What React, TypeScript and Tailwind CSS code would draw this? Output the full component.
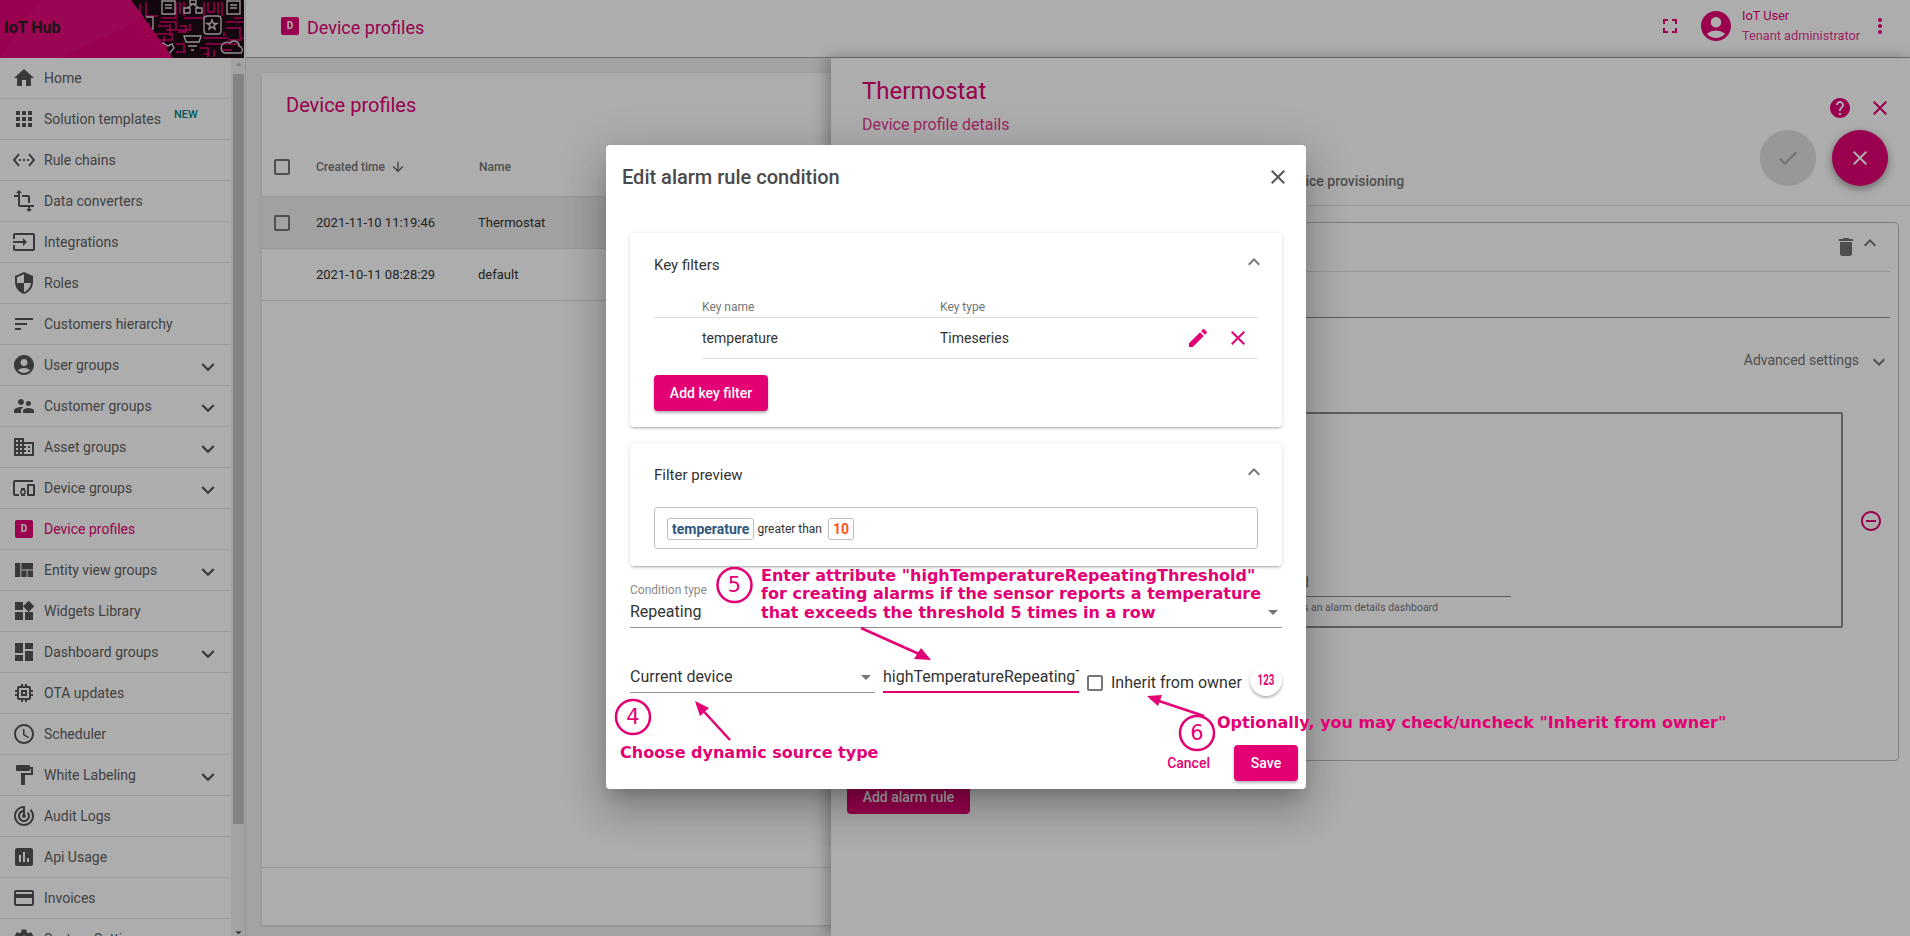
import {
  MdHome, MdApps, MdSettingsEthernet, MdTransform, MdInput, MdSecurity, MdSort, MdAccountCircle,
  MdSupervisorAccount, MdDomain, MdDevicesOther, MdViewQuilt, MdWidgets, MdDashboard, MdMemory,
  MdSchedule, MdFormatPaint, MdTrackChanges, MdAssessment, MdCreditCard, MdSettings, MdExpandMore,
  MdExpandLess, MdClose, MdEdit, MdArrowDownward, MdFullscreen, MdMoreVert, MdHelp, MdCheck, MdDelete,
  MdRemoveCircleOutline, MdArrowDropDown, MdArrowDropUp,
} from 'react-icons/md';
import type { IconType } from 'react-icons';

type NavItem = { label: string; icon?: IconType; more?: boolean; active?: boolean; badge?: boolean };

const nav: NavItem[] = [
  { label: 'Home', icon: MdHome },
  { label: 'Solution templates', icon: MdApps, badge: true },
  { label: 'Rule chains', icon: MdSettingsEthernet },
  { label: 'Data converters', icon: MdTransform },
  { label: 'Integrations', icon: MdInput },
  { label: 'Roles', icon: MdSecurity },
  { label: 'Customers hierarchy', icon: MdSort },
  { label: 'User groups', icon: MdAccountCircle, more: true },
  { label: 'Customer groups', icon: MdSupervisorAccount, more: true },
  { label: 'Asset groups', icon: MdDomain, more: true },
  { label: 'Device groups', icon: MdDevicesOther, more: true },
  { label: 'Device profiles', active: true },
  { label: 'Entity view groups', icon: MdViewQuilt, more: true },
  { label: 'Widgets Library', icon: MdWidgets },
  { label: 'Dashboard groups', icon: MdDashboard, more: true },
  { label: 'OTA updates', icon: MdMemory },
  { label: 'Scheduler', icon: MdSchedule },
  { label: 'White Labeling', icon: MdFormatPaint, more: true },
  { label: 'Audit Logs', icon: MdTrackChanges },
  { label: 'Api Usage', icon: MdAssessment },
  { label: 'Invoices', icon: MdCreditCard },
  { label: 'System Settings', icon: MdSettings },
];

const DBadge = ({ size }: { size: string }) => (
  <span className={`${size} flex items-center justify-center rounded-[2px] bg-[#e20074] text-[10px] font-bold leading-none text-white`}>
    D
  </span>
);

// circuit-board picture behind the logo
const Logo = () => (
  <svg width="244" height="58" viewBox="0 0 244 58" className="absolute inset-0">
    <rect width="244" height="58" fill="#1c0a14" />
    <g stroke="#e20074" strokeWidth="1.5" fill="none">
      <path d="M140 4v20h10M146 2v14h12M176 2v18M184 2v14M204 2v16h-20M222 2v14M214 2v10h-6M160 22h16v8h-10M150 34h22v6h-12M178 30h12v-6M226 22h18M226 28h14v10h4M206 44h34M200 48h8v9M214 50v7M222 50h10M170 24v12M186 52h-10M160 46h6v8M150 40h8v14" />
      <path d="M180 2v12M208 2v10M218 2v12M162 18h14M158 26h12M164 36v8M176 44h8v8M204 38h24M228 40h14M204 54h6M234 18h8M224 36v-4M180 26h6v6h-8" />
    </g>
    <g stroke="#d8d8d8" strokeWidth="1.4" fill="none">
      <path d="M162 1h13v13h-13zM165 5h7M165 8h7M227 1h13v13h-13zM230 5h7M230 8h7" />
      <path d="M184 8h6v5h-6zM196 8h6v5h-6zM190 0h6v4h-6zM193 4l-6 4M193 4l6 4" />
      <rect x="204" y="16" width="17" height="18" rx="3" />
      <path d="M212 20l1.5 3.5h3.5l-3 2 1 3.500-3-2-3 2 1-3.500-3-2h3.500z" />
      <path d="M184 36h17l-2 6h-13zM188 46h9M191 50h3" />
      <path d="M224 53h17a4 4 0 0 0-2-7 5 5 0 0 0-9-3 5 5 0 0 0-6 10zM163 43l5 3 4-2 2 4-6 7-6-6z" />
      <path d="M146 17h7v12h-7" />
    </g>
    <polygon points="0,0 131,0 173,58 0,58" fill="#e20074" />
    <polygon points="40,0 131,0 145,18 60,58 0,58" fill="#ea1a84" opacity="0.35" />
  </svg>
);

const Sidebar = () => (
  <aside className="flex h-full w-[246px] shrink-0 flex-col border-r border-[#dddddd] bg-white">
    <div className="relative h-[58px] w-[244px] shrink-0 overflow-hidden">
      <Logo />
      <span className="absolute left-[4px] top-[17px] text-[16px] font-bold leading-[22px] text-[#222222]">IoT Hub</span>
    </div>
    <div className="flex min-h-0 flex-1">
      <nav className="w-[231px] shrink-0 overflow-hidden">
        {nav.map((item) => {
          const Icon = item.icon;
          return (
            <div key={item.label} className="relative flex h-[41px] shrink-0 items-center border-b border-[#e3e3e3] pl-[12px]">
              <span className="flex w-[32px] shrink-0 items-center">
                {Icon ? <Icon className="size-[24px] text-[#555555]" /> : <span className="pl-[3px]"><DBadge size="size-[18px]" /></span>}
              </span>
              <span className={`text-[14px] leading-[20px] ${item.active ? 'text-[#e20074]' : 'text-[#616161]'}`}>{item.label}</span>
              {item.badge && <span className="ml-[13px] -mt-[9px] text-[11px] font-medium leading-[14px] text-[#00868b]">NEW</span>}
              {item.more && <MdExpandMore className="absolute left-[195px] top-[9px] size-[26px] text-[#555555]" />}
            </div>
          );
        })}
      </nav>
      <div className="relative flex w-[15px] flex-col items-center bg-[#f1f1f1] pt-[16px]">
        <MdArrowDropUp className="absolute -top-[1px] left-0 size-[15px] text-[#bbbbbb]" />
        <div className="ml-[1px] h-[750px] w-[11px] bg-[#c1c1c1]" />
        <MdArrowDropDown className="absolute bottom-[-4px] left-0 size-[15px] text-[#555555]" />
      </div>
    </div>
  </aside>
);

const Header = () => (
  <header className="flex h-[58px] items-center border-b border-[#a8a8a8] bg-white pb-[6px] pl-[35px] pr-[18px]">
    <DBadge size="size-[18px]" />
    <span className="ml-[8px] mt-[4px] text-[18px] text-[#e20074]">Device profiles</span>
    <MdFullscreen className="ml-auto size-[24px] text-[#e20074]" />
    <MdAccountCircle className="ml-[16px] size-[36px] text-[#e20074]" />
    <div className="ml-[8px] flex w-[121px] flex-col gap-[3px] text-[12.75px] leading-[17px] text-[#e20074]">
      <span>IoT User</span>
      <span className="opacity-80">Tenant administrator</span>
    </div>
    <MdMoreVert className="ml-[5px] size-[24px] text-[#e20074]" />
  </header>
);

const Check = () => <span className="size-[16px] rounded-[2px] border-2 border-[#757575]" />;

const ProfilesCard = () => (
  <section className="ml-[16px] mt-[15px] flex h-[852px] w-[570px] flex-col bg-white shadow-sm">
    <h2 className="flex h-[64px] items-center pl-[24px] text-[20px] text-[#e20074]">Device profiles</h2>
    <div className="flex h-[60px] items-center border-b border-[#e0e0e0] pl-[12px] text-[12px] font-medium text-[#757575]">
      <Check />
      <span className="ml-[26px]">Created time</span>
      <MdArrowDownward className="ml-[5px] size-[16px] text-[#616161]" />
      <span className="ml-[73px]">Name</span>
    </div>
    <div className="flex h-[52px] items-center border-b border-[#e0e0e0] bg-[#eeeeee] pl-[12px] text-[13px] text-[#333333]">
      <Check />
      <span className="ml-[26px] w-[162px]">2021-11-10 11:19:46</span>
      <span>Thermostat</span>
    </div>
    <div className="flex h-[52px] items-center border-b border-[#e0e0e0] pl-[54px] text-[13px] text-[#333333]">
      <span className="w-[162px]">2021-10-11 08:28:29</span>
      <span>default</span>
    </div>
    <div className="mt-auto h-[58px] border-t border-[#e0e0e0]" />
  </section>
);

const Drawer = () => (
  <section className="absolute bottom-0 left-[831px] right-0 top-[58px] bg-white shadow-[-4px_0_14px_rgba(0,0,0,0.3)]">
    <div className="relative h-[148px] border-b border-[#e0e0e0] pl-[31px]">
      <h2 className="pt-[16px] text-[24px] leading-[34px] text-[#e20074]">Thermostat</h2>
      <p className="pt-[6px] text-[16px] leading-[22px] text-[#e20074] opacity-80">Device profile details</p>
      <p className="absolute bottom-[14px] left-[451px] text-[14px] font-medium leading-[20px] text-[#757575]">Device provisioning</p>
      <MdHelp className="absolute left-[997px] top-[38px] size-[24px] text-[#e20074]" />
      <MdClose className="absolute left-[1037px] top-[38px] size-[24px] text-[#e20074]" />
      <span className="absolute left-[929px] top-[72px] flex size-[56px] items-center justify-center rounded-full bg-[#e0e0e0]">
        <MdCheck className="size-[24px] text-[#a6a6a6]" />
      </span>
      <span className="absolute left-[1001px] top-[72px] flex size-[56px] items-center justify-center rounded-full bg-[#e20074] shadow-[0_3px_8px_rgba(0,0,0,0.4)]">
        <MdClose className="size-[24px] text-white" />
      </span>
    </div>
    <div className="ml-[16px] mr-[11px] mt-[16px] h-[539px] rounded-[4px] border border-[#bdbdbd] pl-[8px] pr-[8px]">
      <div className="flex h-[49px] items-center justify-end border-b border-[#e0e0e0] pr-[8px]">
        <MdDelete className="size-[24px] text-[#757575]" />
        <MdExpandLess className="-mt-[8px] size-[24px] text-[#757575]" />
      </div>
      <div className="h-[46px] border-b border-[#8c8c8c]" />
      <div className="flex h-[94px] items-start justify-end pt-[30px] text-[14px] leading-[24px] text-[#757575]">
        Advanced settings
        <MdExpandMore className="-mr-[1px] ml-[8px] mt-[2px] size-[24px]" />
      </div>
      <div className="flex items-center">
        <div className="flex h-[216px] w-[987px] flex-col items-end justify-end rounded-[2px] border-2 border-[#8c8c8c] pb-[11px] pr-[330px]">
          <div className="w-[400px] border-b border-[#8c8c8c] pb-[3px] text-[14px] leading-[22px] text-[#757575]">
            <span className="block w-[198px] text-right">Mobile dashboard field</span>
          </div>
          <div className="mt-[4px] w-[400px] text-[10.5px] leading-[14px] text-[#757575]">
            <span className="block w-[327px] whitespace-nowrap text-right">Used by mobile app as an alarm details dashboard</span>
          </div>
        </div>
        <MdRemoveCircleOutline className="ml-[16px] mt-[1px] size-[24px] text-[#e20074]" />
      </div>
    </div>
    <button className="ml-[16px] mt-[17px] h-[36px] w-[123px] rounded-[4px] bg-[#e20074] pt-[2px] text-[14px] font-medium text-white">Add alarm rule</button>
  </section>
);

const ModalCard = ({ title, children }: { title: string; children: React.ReactNode }) => (
  <div className="rounded-[4px] bg-white px-[24px] shadow-[0_2px_2px_-1px_rgba(0,0,0,0.25),0_1px_4px_rgba(0,0,0,0.14)]">
    <div className="flex h-[64px] items-center justify-between">
      <span className="pt-[1px] text-[15px] text-[#333333]">{title}</span>
      <MdExpandLess className="-mr-[8px] -mt-[6px] size-[24px] text-[#757575]" />
    </div>
    {children}
  </div>
);

const Modal = () => (
  <div className="absolute left-[606px] top-[145px] flex h-[644px] w-[700px] flex-col rounded-[4px] bg-white px-[24px] shadow-[0_11px_15px_-7px_rgba(0,0,0,0.2),0_24px_38px_3px_rgba(0,0,0,0.14),0_9px_46px_8px_rgba(0,0,0,0.12)]">
    <div className="flex h-[64px] shrink-0 items-center justify-between -ml-[8px] -mr-[8px]">
      <h2 className="text-[20px] font-medium text-[#4a4a4a]">Edit alarm rule condition</h2>
      <MdClose className="size-[24px] text-[#555555]" />
    </div>
    <div className="mt-[24px] flex flex-col gap-[16px]">
      <ModalCard title="Key filters">
        <div className="flex h-[21px] items-center border-b border-[#dddddd] pl-[48px] text-[12px] text-[#757575]">
          <span className="w-[238px]">Key name</span>
          <span>Key type</span>
        </div>
        <div className="ml-[48px] flex h-[41px] items-center border-b border-[#e0e0e0] text-[14px] text-[#333333]">
          <span className="w-[238px]">temperature</span>
          <span>Timeseries</span>
          <MdEdit className="ml-auto size-[24px] text-[#e20074]" />
          <MdClose className="ml-[16px] mr-[8px] size-[24px] text-[#e20074]" />
        </div>
        <button className="mb-[16px] mt-[16px] block h-[36px] w-[114px] rounded-[4px] bg-[#e20074] text-[14px] font-medium text-white shadow-[0_2px_3px_rgba(0,0,0,0.3)]">
          Add key filter
        </button>
      </ModalCard>
      <ModalCard title="Filter preview">
        <div className="mb-[17px] flex h-[42px] items-center gap-[4px] rounded-[4px] border border-[#bdbdbd] px-[12px] pt-[1px] text-[12px] text-[#333333]">
          <span className="rounded-[3px] border border-[#bdbdbd] px-[4px] text-[14px] font-bold leading-[20px] text-[#305680]">temperature</span>
          <span className="-ml-[1px]">greater than</span>
          <span className="ml-[2px] rounded-[3px] border border-[#bdbdbd] px-[4px] text-[14px] font-bold leading-[20px] text-[#ff5722]">10</span>
        </div>
      </ModalCard>
    </div>
    <div className="mt-[16px] flex h-[46px] flex-col justify-end border-b border-[#8c8c8c] pb-[3px]">
      <span className="mb-[3px] text-[12px] leading-[14px] text-[#8a8a8a]">Condition type</span>
      <div className="flex items-center justify-between">
        <span className="text-[16px] leading-[24px] text-[#333333]">Repeating</span>
        <MdArrowDropDown className="-mr-[3px] size-[24px] text-[#757575]" />
      </div>
    </div>
    <div className="mt-[36px] flex items-start">
      <div className="flex h-[29px] w-[245px] items-center justify-between border-b border-[#8c8c8c] pb-[2px]">
        <span className="text-[16px] text-[#333333]">Current device</span>
        <MdArrowDropDown className="-mr-[3px] size-[24px] text-[#757575]" />
      </div>
      <div className="ml-[8px] h-[29px] w-[196px] overflow-hidden whitespace-nowrap border-b-2 border-[#e20074] pt-[1px] text-[16px] leading-[24px] text-[#333333]">
        highTemperatureRepeatingThreshold
      </div>
      <span className="ml-[8px] mt-[11px] size-[16px] rounded-[2px] border-2 border-[#757575]" />
      <span className="ml-[8px] mt-[7px] text-[16px] leading-[24px] text-[#333333]">Inherit from owner</span>
      <span className="ml-[8px] flex size-[32px] items-center justify-center rounded-full bg-white text-[14px] font-bold text-[#e20074] shadow-[0_2px_3px_rgba(0,0,0,0.3)]">
        <span className="scale-x-70">123</span>
      </span>
    </div>
    <div className="-mr-[16px] mb-[8px] mt-auto flex items-center justify-end">
      <span className="mr-[24px] text-[14px] font-medium text-[#e20074]">Cancel</span>
      <button className="h-[36px] w-[64px] rounded-[4px] bg-[#e20074] text-[14px] font-medium text-white shadow-[0_2px_3px_rgba(0,0,0,0.3)]">Save</button>
    </div>
  </div>
);

const Arrow = ({ d }: { d: string }) => <path d={d} fill="none" stroke="#e20074" strokeWidth="2.5" />;

const noteFont = { fontFamily: '"DejaVu Sans", sans-serif' };

// tutorial markup drawn on top of the screenshot
const Annotations = () => (
  <>
    <svg width="1910" height="936" className="pointer-events-none absolute inset-0">
      <g fill="none" stroke="#e20074" strokeWidth="2.5">
        <ellipse cx="734.500" cy="585" rx="17" ry="17" />
        <ellipse cx="633" cy="717" rx="17" ry="17" />
        <ellipse cx="1197" cy="733" rx="17" ry="17" />
      </g>
      <Arrow d="M861 628L928 658" />
      <path d="M931 660L914 659L921 648Z" fill="#e20074" />
      <Arrow d="M730 740L697 704" />
      <path d="M695 701L709 708L700 716Z" fill="#e20074" />
      <Arrow d="M1204 716L1150 698" />
      <path d="M1147 696L1162 695L1158 706Z" fill="#e20074" />
    </svg>
    <span className="absolute left-[724.500px] top-[571px] w-[20px] text-center text-[21px] leading-[28px] text-[#e20074]" style={noteFont}>5</span>
    <span className="absolute left-[623px] top-[703px] w-[20px] text-center text-[21px] leading-[28px] text-[#e20074]" style={noteFont}>4</span>
    <span className="absolute left-[1187px] top-[719px] w-[20px] text-center text-[21px] leading-[28px] text-[#e20074]" style={noteFont}>6</span>
    <div className="absolute left-[761px] top-[567px] whitespace-nowrap text-[16px] font-bold leading-[18.250px] text-[#e20074]" style={noteFont}>
      <div>Enter attribute "highTemperatureRepeatingThreshold"</div>
      <div>for creating alarms if the sensor reports a temperature</div>
      <div>that exceeds the threshold 5 times in a row</div>
    </div>
    <div className="absolute left-[620px] top-[744px] whitespace-nowrap text-[16px] font-bold leading-[18px] text-[#e20074]" style={noteFont}>
      Choose dynamic source type
    </div>
    <div className="absolute left-[1217px] top-[714px] whitespace-nowrap text-[16px] font-bold leading-[18px] text-[#e20074]" style={noteFont}>
      Optionally, you may check/uncheck "Inherit from owner"
    </div>
  </>
);

export default function App() {
  return (
    <div className="relative flex h-[936px] w-[1910px] overflow-hidden bg-[#f0f0f0] font-['Roboto',sans-serif]">
      <Sidebar />
      <main className="flex min-w-0 flex-1 flex-col">
        <Header />
        <ProfilesCard />
      </main>
      <Drawer />
      <div className="absolute inset-0 bg-black/32" />
      <Modal />
      <Annotations />
    </div>
  );
}
